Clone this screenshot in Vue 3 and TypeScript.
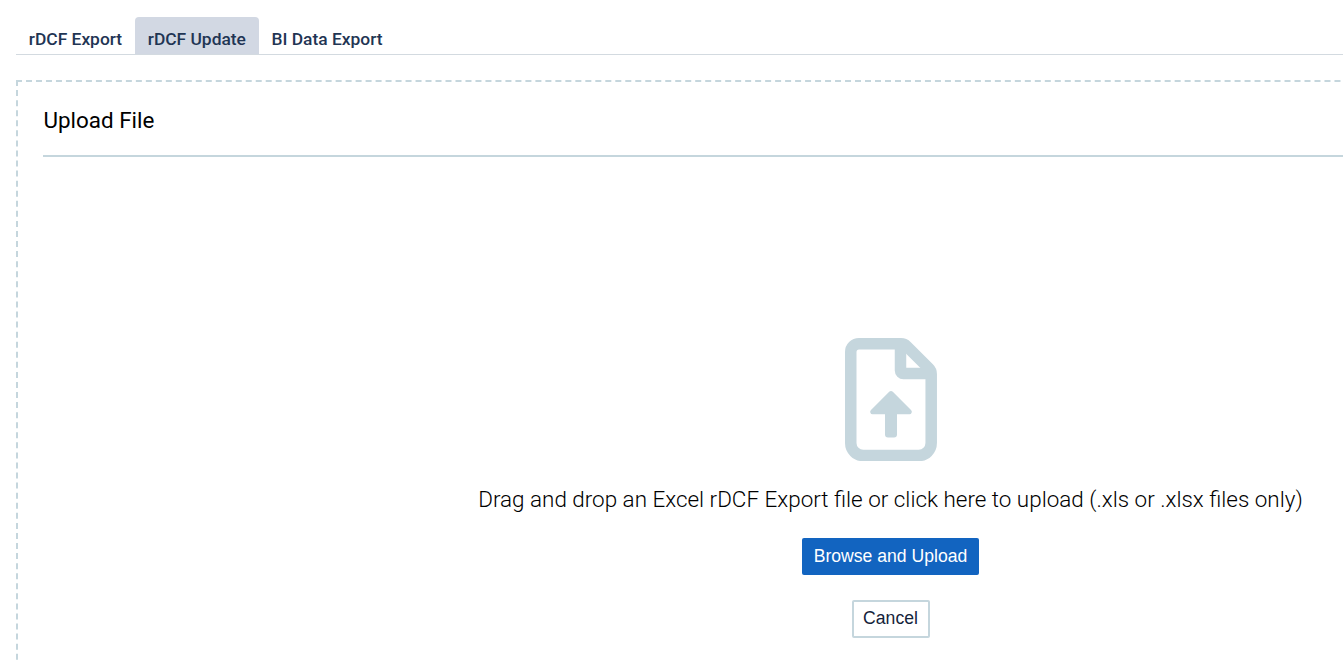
<script setup lang="ts">
const tabs: { label: string; active?: boolean }[] = [
  { label: 'rDCF Export' },
  { label: 'rDCF Update', active: true },
  { label: 'BI Data Export' },
]
</script>

<template>
  <div class="page">
    <nav class="tabs">
      <button v-for="t in tabs" :key="t.label" class="tab" :class="{ active: t.active }">{{ t.label }}</button>
    </nav>
    <section class="panel">
      <h2 class="title">Upload File</h2>
      <div class="drop">
        <svg class="icon" width="92" height="123" viewBox="0 0 92 123" fill="none">
          <path d="M14 5.75H56a8 8 0 0 1 5.7 2.4L83.8 30.3a8 8 0 0 1 2.4 5.7V105a12.5 12.5 0 0 1-12.5 12.5H18.3A12.5 12.5 0 0 1 5.75 105V14A8.25 8.25 0 0 1 14 5.75Z" stroke="#c5d6dd" stroke-width="11.5" stroke-linejoin="round"/>
          <path d="M55.5 7V32.5a3 3 0 0 0 3 3H85" stroke="#c5d6dd" stroke-width="11.5" stroke-linejoin="round"/>
          <path d="M46 53a2.500 2.500 0 0 1 1.800.8L66 72a2.400 2.400 0 0 1-1.700 4.200H52V96.500a3 3 0 0 1-3 3H43a3 3 0 0 1-3-3V76.200H27.700a2.400 2.400 0 0 1-1.700-4.200L44.200 53.800a2.500 2.500 0 0 1 1.800-.8Z" fill="#c5d6dd"/>
        </svg>
        <p class="hint">Drag and drop an Excel rDCF Export file or click here to upload (.xls or .xlsx files only)</p>
        <button class="btn primary">Browse and Upload</button>
        <button class="btn cancel">Cancel</button>
      </div>
    </section>
  </div>
</template>

<style scoped>
.page {
  width: 1343px;
  height: 661px;
  overflow: hidden;
  box-sizing: border-box;
  padding: 17px 0 0 16px;
  background: #fff;
}
.tabs {
  display: flex;
  height: 37px;
  border-bottom: 1px solid #d3dae0;
  box-sizing: content-box;
}
.tab {
  appearance: none;
  border: 0;
  background: none;
  margin: 0;
  padding: 7px 12.8px 0;
  height: 37px;
  font: 500 17.4px/30px Roboto, sans-serif;
  color: #1f3554;
  border-radius: 4px 4px 0 0;
}
.tab.active {
  background: #d2d8e3;
}
.panel {
  width: 1724px;
  height: 620px;
  margin-top: 25px;
  box-sizing: border-box;
  border: 2px dashed #c5d6dd;
  padding: 0 0 0 25px;
}
.title {
  margin: 0;
  height: 75px;
  box-sizing: border-box;
  border-bottom: 2px solid #c5d6dd;
  padding: 23px 0 0 0.5px;
  font: 400 22.4px/30px Roboto, sans-serif;
  color: #000;
}
.drop {
  display: flex;
  flex-direction: column;
  align-items: center;
  padding-top: 181px;
}
.icon {
  display: block;
}
.hint {
  margin: 23px 0 0;
  font: 300 22.45px/30px Roboto, sans-serif;
  color: #000;
  white-space: nowrap;
}
.btn {
  appearance: none;
  box-sizing: border-box;
  font: 400 17.6px/20px "Liberation Sans", Arial, sans-serif;
  margin: 0;
  padding: 0 0 2px;
}
.primary {
  margin-top: 24px;
  width: 177px;
  height: 37px;
  border: 0;
  border-radius: 2px;
  background: #1264c0;
  color: #fff;
}
.cancel {
  margin-top: 25px;
  width: 78px;
  height: 38px;
  border: 2px solid #c5d6dd;
  border-radius: 2px;
  background: #fff;
  color: #14233a;
}
</style>
